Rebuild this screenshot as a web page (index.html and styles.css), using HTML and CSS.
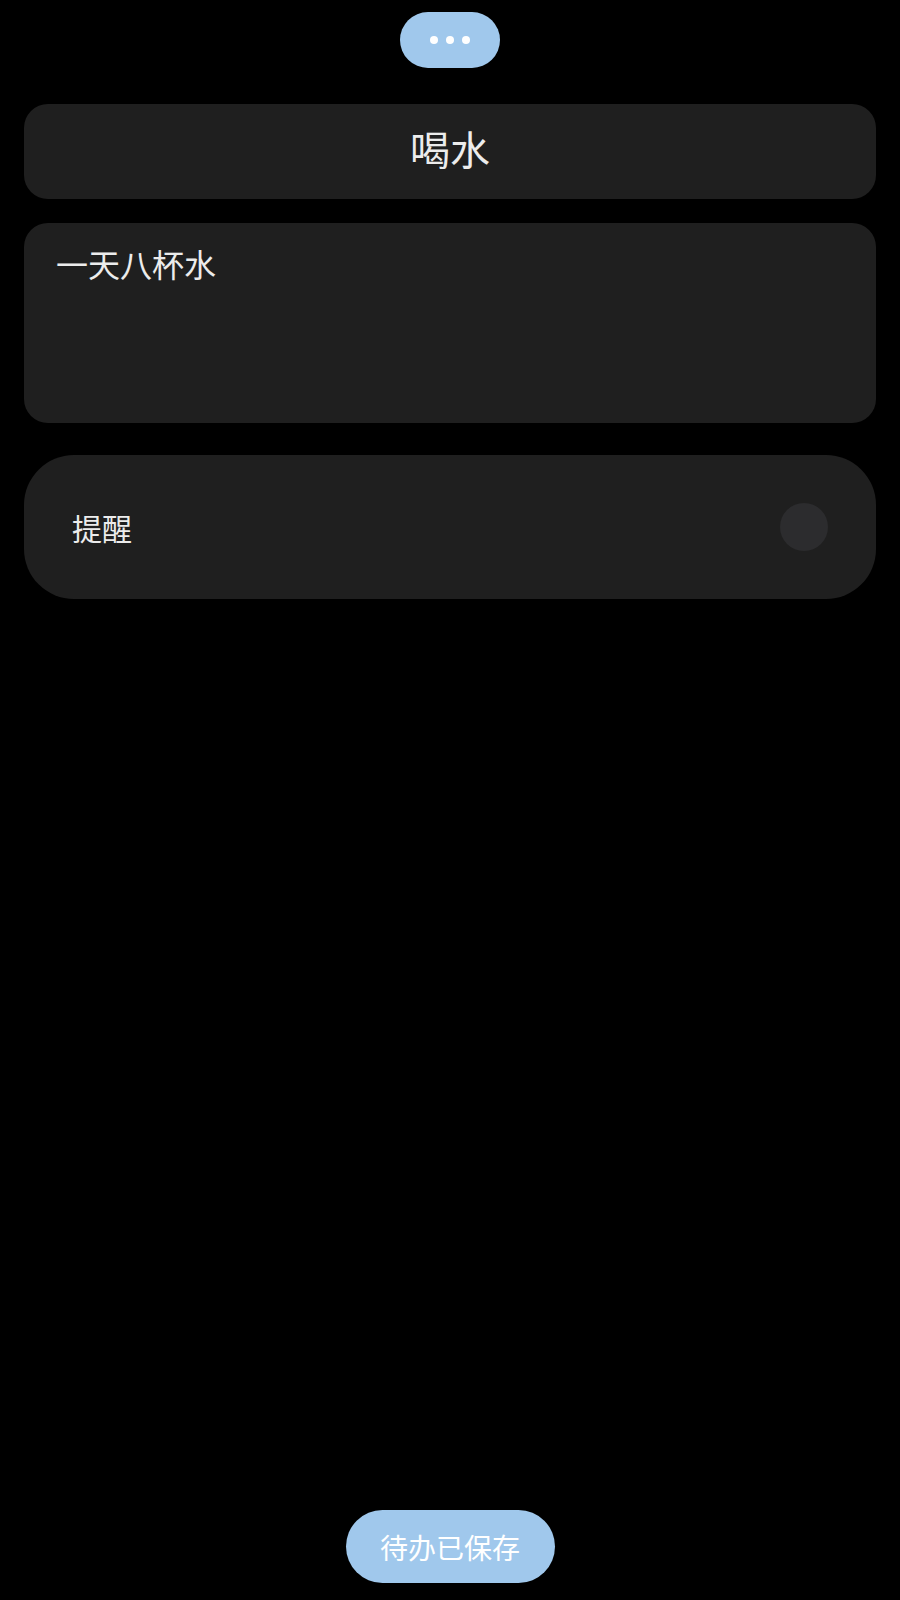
FILE: index.html
```html
<!DOCTYPE html>
<html lang="zh-CN">
<head>
<meta charset="utf-8">
<title>喝水</title>
<link rel="stylesheet" href="styles.css">
</head>
<body>
<div class="page">
  <div class="top">
    <button class="more" aria-label="更多">
      <span class="dot"></span><span class="dot"></span><span class="dot"></span>
    </button>
  </div>
  <div class="card title-card">喝水</div>
  <div class="card note-card">一天八杯水</div>
  <div class="card remind-card">
    <span class="remind-label">提醒</span>
    <span class="toggle"></span>
  </div>
  <div class="bottom">
    <div class="saved">待办已保存</div>
  </div>
</div>
</body>
</html>
```

FILE: styles.css
```css
html, body {
  margin: 0;
  padding: 0;
  background: #000;
}
body {
  font-family: "Noto Sans CJK SC", "Noto Sans", sans-serif;
  color: #ececec;
}
.page {
  min-height: 1600px;
  display: flex;
  flex-direction: column;
  box-sizing: border-box;
  padding: 12px 24px 17px;
}
.top {
  display: flex;
  justify-content: center;
}
.more {
  width: 100px;
  height: 56px;
  border: none;
  border-radius: 28px;
  background: #a0c8ec;
  display: flex;
  align-items: center;
  justify-content: center;
  gap: 8px;
  padding: 0;
}
.dot {
  width: 8px;
  height: 8px;
  border-radius: 50%;
  background: #fff;
}
.card {
  background: #1f1f1f;
  box-sizing: border-box;
}
.title-card {
  margin-top: 36px;
  height: 95px;
  border-radius: 24px;
  display: flex;
  align-items: center;
  justify-content: center;
  padding-bottom: 8px;
  font-size: 40px;
  line-height: 1;
}
.note-card {
  margin-top: 24px;
  height: 200px;
  border-radius: 24px;
  padding: 18px 32px;
  font-size: 32px;
  line-height: 1.4;
}
.remind-card {
  margin-top: 32px;
  height: 144px;
  border-radius: 50px;
  padding: 0 48px 0 48px;
  display: flex;
  align-items: center;
  justify-content: space-between;
}
.remind-label {
  font-size: 30px;
  line-height: 1;
}
.toggle {
  width: 48px;
  height: 48px;
  border-radius: 50%;
  background: #2c2c2e;
}
.bottom {
  margin-top: auto;
  display: flex;
  justify-content: center;
}
.saved {
  width: 209px;
  height: 73px;
  border-radius: 37px;
  background: #a0c8ec;
  color: #fff;
  font-size: 28px;
  display: flex;
  align-items: center;
  justify-content: center;
}
```
